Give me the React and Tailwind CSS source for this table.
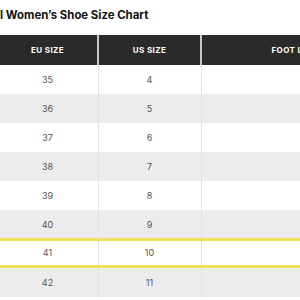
const rows = [
  { eu: '35', us: '4' },
  { eu: '36', us: '5' },
  { eu: '37', us: '6' },
  { eu: '38', us: '7' },
  { eu: '39', us: '8' },
  { eu: '40', us: '9' },
  { eu: '41', us: '10', active: true },
  { eu: '42', us: '11' },
];

export default function App() {
  return (
    <div className="w-[300px] h-[300px] overflow-hidden bg-white font-['Inter',sans-serif]">
      <h2 className="h-[35px] pt-[7px] text-[11.4px] leading-[16px] font-bold text-[#111] whitespace-nowrap">
        l Women’s Shoe Size Chart
      </h2>
      <div className="ml-[-2px] w-[420px]">
        <div className="flex h-[30px] bg-[#2a2a2a] text-white text-[8px] font-bold tracking-[0.4px] uppercase">
          <div className="w-[99px] flex items-center justify-center">EU Size</div>
          <div className="w-[2px] bg-[#c8c8c8]"></div>
          <div className="w-[101px] flex items-center justify-center">US Size</div>
          <div className="w-[2px] bg-[#c8c8c8]"></div>
          <div className="w-[200px] flex items-center justify-center">Foot Length</div>
        </div>
        {rows.map((r, i) => (
          <div
            key={r.eu}
            className={`flex text-[9px] text-[#555] ${
              r.active
                ? 'h-[30px] -mt-[1px] border-y-[3px] border-[#ede35a] bg-white'
                : i % 2 === 1
                ? 'h-[29px] bg-[#ececec]'
                : 'h-[29px] bg-white'
            }`}
          >
            <div className="w-[99px] flex items-center justify-center">{r.eu}</div>
            <div className="w-[2px] flex justify-center"><div className="w-px bg-[#e2e2e2]"></div></div>
            <div className="w-[101px] flex items-center justify-center">{r.us}</div>
            <div className="w-[2px] flex justify-center"><div className="w-px bg-[#e2e2e2]"></div></div>
            <div className="w-[200px]"></div>
          </div>
        ))}
      </div>
    </div>
  );
}
